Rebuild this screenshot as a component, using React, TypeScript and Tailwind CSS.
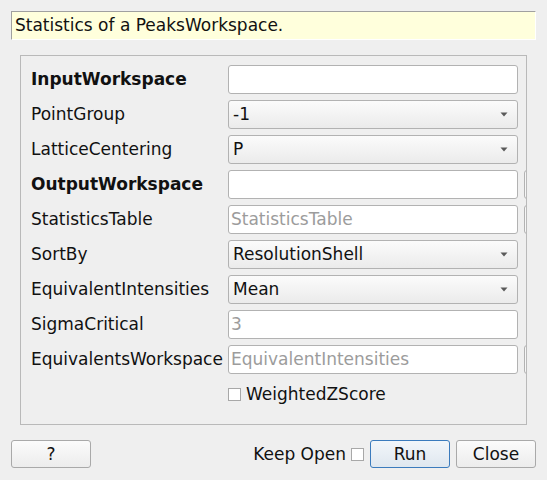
import React from 'react';

type Row =
  | { label: string; bold?: boolean; kind: 'text'; value?: string; placeholder?: string; browse?: boolean }
  | { label: string; bold?: boolean; kind: 'combo'; value: string };

const rows: Row[] = [
  { label: 'InputWorkspace', bold: true, kind: 'text' },
  { label: 'PointGroup', kind: 'combo', value: '-1' },
  { label: 'LatticeCentering', kind: 'combo', value: 'P' },
  { label: 'OutputWorkspace', bold: true, kind: 'text', browse: true },
  { label: 'StatisticsTable', kind: 'text', placeholder: 'StatisticsTable', browse: true },
  { label: 'SortBy', kind: 'combo', value: 'ResolutionShell' },
  { label: 'EquivalentIntensities', kind: 'combo', value: 'Mean' },
  { label: 'SigmaCritical', kind: 'text', placeholder: '3' },
  { label: 'EquivalentsWorkspace', kind: 'text', placeholder: 'EquivalentIntensities', browse: true },
];

const Arrow = () => (
  <svg width="8" height="5" viewBox="0 0 8 5" className="shrink-0">
    <path d="M0.5 0.5 L7.5 0.5 L4 4.5 Z" fill="#5a5a5a" />
  </svg>
);

const Field: React.FC<{ row: Row }> = ({ row }) => {
  if (row.kind === 'combo') {
    return (
      <div className="w-[290px] h-[29px] shrink-0 rounded-[3px] border border-[#b2b2b2] bg-gradient-to-b from-[#fbfbfb] to-[#ebebeb] flex items-center pl-[4px] pr-[9px]">
        <span className="flex-1 text-[#111]">{row.value}</span>
        <Arrow />
      </div>
    );
  }
  return (
    <div className="flex items-center gap-[6px] shrink-0">
      <div className="w-[290px] h-[29px] shrink-0 rounded-[3px] border border-[#b2b2b2] bg-white flex items-center pl-[2px]">
        {row.placeholder && <span className="text-[#9c9c9c]">{row.placeholder}</span>}
      </div>
      {row.browse && (
        <div className="w-[40px] h-[29px] shrink-0 rounded-[3px] border border-[#b2b2b2] bg-[#f6f6f6]" />
      )}
    </div>
  );
};

export default function App() {
  return (
    <div
      className="w-[547px] h-[480px] bg-[#efefef] text-[17px] leading-none text-[#111] overflow-hidden flex flex-col"
      style={{ fontFamily: '"DejaVu Sans", "Liberation Sans", sans-serif' }}
    >
      <div className="ml-[11px] mt-[11px] w-[525px] h-[29px] bg-[#ffffdc] border-t border-l border-[#a0a0a0] border-r border-b border-r-white border-b-white flex items-center pl-[3px]">
        Statistics of a PeaksWorkspace.
      </div>

      <div className="ml-[20px] mt-[15px] w-[507px] h-[370px] border border-[#b9b9b9] overflow-hidden">
        <div className="pt-[9px] pl-[10px] flex flex-col gap-[6px]">
          {rows.map((r) => (
            <div key={r.label} className="h-[29px] flex items-center">
              <span className={`w-[197px] shrink-0 whitespace-nowrap ${r.bold ? 'font-bold' : ''}`}>{r.label}</span>
              <Field row={r} />
            </div>
          ))}
          <div className="h-[29px] flex items-center pl-[197px]">
            <div className="w-[13px] h-[13px] border border-[#a8a8a8] bg-white shrink-0" />
            <span className="ml-[5px]">WeightedZScore</span>
          </div>
        </div>
      </div>

      <div className="mt-[15px] px-[11px] flex items-center h-[28px]">
        <div className="w-[80px] h-[28px] rounded-[3px] border border-[#a9a9a9] bg-gradient-to-b from-[#fbfbfb] to-[#ececec] flex items-center justify-center">
          ?
        </div>
        <div className="flex-1" />
        <span>Keep Open</span>
        <div className="ml-[5px] w-[13px] h-[13px] border border-[#a8a8a8] bg-white" />
        <div className="ml-[6px] w-[80px] h-[28px] rounded-[3px] border border-[#3b7bbd] bg-gradient-to-b from-[#f2f6fa] to-[#dfe7ef] flex items-center justify-center">
          Run
        </div>
        <div className="ml-[6px] w-[80px] h-[28px] rounded-[3px] border border-[#a9a9a9] bg-gradient-to-b from-[#fbfbfb] to-[#ececec] flex items-center justify-center">
          Close
        </div>
      </div>
    </div>
  );
}
